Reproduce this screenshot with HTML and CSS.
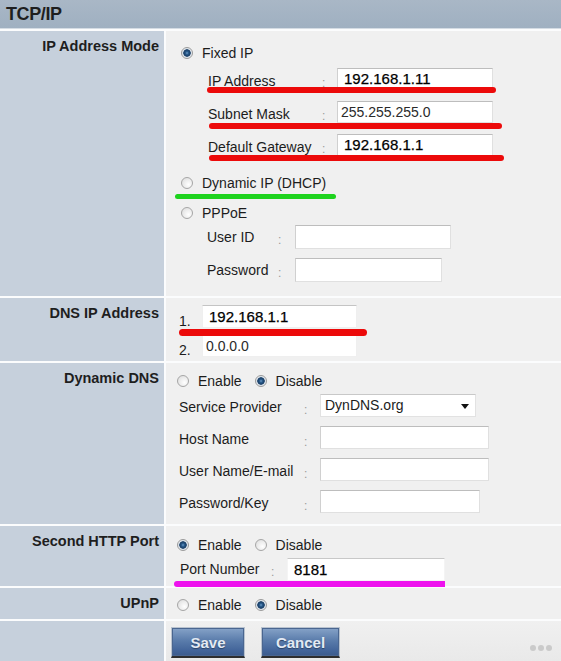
FILE: index.html
```html
<!DOCTYPE html>
<html lang="en">

<head>
    <meta charset="UTF-8">
    <meta name="viewport" content="width=device-width, initial-scale=1.0">
    <title>TCP/IP</title>
    <link rel="stylesheet" href="styles.css">
</head>

<body>
    <div class="panel">
        <div class="title">TCP/IP</div>

        <!-- IP address mode -->
        <div class="label">IP Address Mode</div>
        <div class="cell mode">
            <div class="opt"><span class="radio on"></span>Fixed IP</div>
            <div class="field fixed mark red-ip">
                <span class="name">IP Address</span><span class="colon">:</span>
                <input class="box strong" type="text" value="192.168.1.11">
            </div>
            <div class="field fixed mark red-mask">
                <span class="name">Subnet Mask</span><span class="colon">:</span>
                <input class="box" type="text" value="255.255.255.0">
            </div>
            <div class="field fixed mark red-gw">
                <span class="name">Default Gateway</span><span class="colon">:</span>
                <input class="box strong" type="text" value="192.168.1.1">
            </div>
            <div class="opt dyn mark green-dhcp"><span class="radio"></span>Dynamic IP (DHCP)</div>
            <div class="opt pppoe"><span class="radio"></span>PPPoE</div>
            <div class="field sub">
                <span class="name">User ID</span><span class="colon">:</span>
                <input class="box w156" type="text" value="">
            </div>
            <div class="field sub pass">
                <span class="name">Password</span><span class="colon">:</span>
                <input class="box w147" type="text" value="">
            </div>
        </div>

        <!-- DNS -->
        <div class="label">DNS IP Address</div>
        <div class="cell dns">
            <div class="dns-line mark red-dns">
                <span class="num">1.</span>
                <input class="box strong" type="text" value="192.168.1.1">
            </div>
            <div class="dns-line second">
                <span class="num">2.</span>
                <input class="box" type="text" value="0.0.0.0">
            </div>
        </div>

        <!-- Dynamic DNS -->
        <div class="label">Dynamic DNS</div>
        <div class="cell ddns">
            <div class="opt pair">
                <span class="choice"><span class="radio"></span>Enable</span>
                <span class="choice"><span class="radio on"></span>Disable</span>
            </div>
            <div class="field dd">
                <span class="name">Service Provider</span><span class="colon">:</span>
                <span class="select">DynDNS.org</span>
            </div>
            <div class="field dd">
                <span class="name">Host Name</span><span class="colon">:</span>
                <input class="box w169" type="text" value="">
            </div>
            <div class="field dd">
                <span class="name">User Name/E-mail</span><span class="colon">:</span>
                <input class="box w169" type="text" value="">
            </div>
            <div class="field dd">
                <span class="name">Password/Key</span><span class="colon">:</span>
                <input class="box w160" type="text" value="">
            </div>
        </div>

        <!-- Second HTTP port -->
        <div class="label">Second HTTP Port</div>
        <div class="cell http">
            <div class="opt pair">
                <span class="choice"><span class="radio on"></span>Enable</span>
                <span class="choice"><span class="radio"></span>Disable</span>
            </div>
            <div class="field port mark pink-port">
                <span class="name">Port Number</span><span class="colon">:</span>
                <input class="box strong w158" type="text" value="8181">
            </div>
        </div>

        <!-- UPnP -->
        <div class="label">UPnP</div>
        <div class="cell upnp">
            <div class="opt pair">
                <span class="choice"><span class="radio"></span>Enable</span>
                <span class="choice"><span class="radio on"></span>Disable</span>
            </div>
        </div>

        <div class="label blank"></div>
        <div class="cell buttons">
            <button class="btn save">Save</button>
            <button class="btn cancel">Cancel</button>
            <div class="dots"><span></span><span></span><span></span></div>
        </div>
    </div>
</body>

</html>
```

FILE: styles.css
```css
body {
    margin: 0;
    font-family: 'Liberation Sans', Arial, sans-serif;
    font-size: 14px;
    color: #1c1c1c;
    background: #f0f0f0;
}

.panel {
    display: grid;
    grid-template-columns: 164px 1fr;
    align-content: start;
    gap: 2px;
    background: #fbfcfd;
    width: 561px;
    height: 661px;
    overflow: hidden;
}

.title {
    grid-column: 1 / -1;
    height: 28px;
    line-height: 28px;
    padding-left: 6px;
    font-size: 18px;
    font-weight: bold;
    color: #1e1e1e;
    letter-spacing: -0.4px;
    background: linear-gradient(#a9b7c6, #9fb0c1);
    border-bottom: 1px solid #d4dce4;
}

.label {
    background: #c6d0dc;
    text-align: right;
    padding: 7px 5px 0 0;
    font-size: 14.5px;
    line-height: 16px;
    font-weight: bold;
    color: #1e1e1e;
}

.cell {
    background: #f0f0f0;
}

/* radio lines */
.opt {
    display: flex;
    align-items: center;
    height: 22px;
    padding-left: 15px;
}

.radio {
    display: inline-block;
    box-sizing: border-box;
    width: 12px;
    height: 12px;
    margin-right: 9px;
    border-radius: 50%;
    border: 1px solid #a6a6a6;
    background: radial-gradient(circle at 65% 65%, #ffffff, #dadada);
}

.radio.on {
    border-color: #9a9a9a;
    background: radial-gradient(circle at 50% 50%, #6d9cc7 0, #2a5b8c 1.5px, #173b62 3.4px, #d5dee8 4px, #fafafa 6px);
}

.choice {
    display: inline-flex;
    align-items: center;
    margin-right: 13px;
}

.pair {
    padding-left: 11px;
}

/* label : input rows */
.field {
    display: flex;
    align-items: center;
}

.name {
    white-space: nowrap;
}

.colon {
    color: #9a9a9a;
    font-size: 12px;
    padding-top: 5px;
}

.box {
    box-sizing: border-box;
    height: 22px;
    margin: -4px 0 0 0;
    padding: 0 0 0 3px;
    border: 1px solid #e0e0e0;
    border-top-color: #bdbdbd;
    border-left-color: #d0d0d0;
    background: #fff;
    font-family: 'Liberation Sans', Arial, sans-serif;
    font-size: 14px;
    color: #2a2a2a;
    outline: none;
}

.box.strong {
    padding-left: 6px;
    font-size: 15px;
    color: #000;
    -webkit-text-stroke: 0.25px #000;
}

.mode {
    padding: 11px 0 13px 0;
}

.fixed {
    height: 33px;
    padding-left: 42px;
}

.fixed .name {
    width: 114px;
}

.fixed .colon {
    width: 15px;
}

.fixed .box {
    width: 156px;
}

.dyn {
    margin-top: 9px;
}

.pppoe {
    margin-top: 8px;
}

.sub {
    height: 26px;
    padding-left: 41px;
}

.sub .name {
    width: 71px;
}

.sub .colon {
    width: 17px;
}

.sub .box {
    height: 24px;
    margin-top: 0;
}

.sub.pass {
    margin-top: 7px;
}

.w147 { width: 147px; }
.w156 { width: 156px; }
.w158 { width: 158px; }
.w160 { width: 160px; }
.w169 { width: 169px; }

/* DNS */
.dns {
    padding: 7px 0 4px 0;
}

.dns-line {
    display: flex;
    align-items: flex-end;
    padding-left: 13px;
}

.dns-line .num {
    width: 23px;
    line-height: 16px;
    margin-bottom: -1px;
}

.dns-line .box {
    width: 155px;
    height: 23px;
    margin: 0;
    border-color: #efefef;
    border-top-color: #c4c4c4;
}

.dns-line.second {
    margin-top: 6px;
}

.dns-line.second .box {
    border-top-color: #f2f2f2;
}

/* Dynamic DNS */
.ddns {
    padding: 8px 0 5px 0;
}

.ddns .pair {
    height: 20px;
}

.dd {
    height: 32px;
    padding-left: 13px;
}

.dd .name {
    width: 125px;
}

.dd .colon {
    width: 16px;
}

.dd .box {
    height: 23px;
}

.select {
    position: relative;
    box-sizing: border-box;
    width: 156px;
    height: 23px;
    margin-top: -4px;
    padding-left: 4px;
    line-height: 21px;
    background: #fff;
    border: 1px solid #e2e2e2;
    border-top-color: #c8c8c8;
}

.select::after {
    content: "";
    position: absolute;
    right: 6px;
    top: 9px;
    border-left: 4px solid transparent;
    border-right: 4px solid transparent;
    border-top: 5px solid #111;
}

/* HTTP port */
.http {
    padding: 8px 0 4px 0;
}

.port {
    height: 26px;
    padding-left: 14px;
}

.port .name {
    width: 91px;
}

.port .colon {
    width: 16px;
}

.port .box {
    height: 23px;
    margin: 0;
    border-color: #f4f4f4;
    border-top-color: #c8c8c8;
}

.upnp {
    padding: 6px 0 3px 0;
}

/* buttons row */
.blank {
    padding: 0;
    height: 40px;
}

.buttons {
    display: flex;
    gap: 16px;
    height: 40px;
    box-sizing: border-box;
    padding: 6px 0 0 5px;
    background: linear-gradient(#f0f0f0, #e9e9e9);
}

.btn {
    height: 31px;
    padding: 0;
    border: 1px solid #b9c3cf;
    border-bottom: 2px solid #2e2e2e;
    background: linear-gradient(#86a3c8, #5a7cab 45%, #43659a 80%, #3b5b8c);
    box-shadow: inset 0 0 0 1px #4a6690;
    font-family: 'Liberation Sans', Arial, sans-serif;
    font-size: 15px;
    font-weight: bold;
    color: #e3eaf3;
    text-shadow: 0 1px 1px #2b4366;
}

.save {
    width: 74px;
}

.cancel {
    width: 79px;
}

.dots {
    display: flex;
    gap: 2px;
    margin: auto 9px 10px auto;
}

.dots span {
    width: 6px;
    height: 6px;
    border-radius: 50%;
    background: #cacaca;
}

/* hand-drawn marks over the form */
.mark {
    position: relative;
}

.mark::after {
    content: "";
    position: absolute;
    height: 6px;
    border-radius: 3px;
    background: #ec0a0a;
}

.red-ip::after {
    left: 41px;
    top: 23px;
    width: 289px;
}

.red-mask::after {
    left: 43px;
    top: 26px;
    width: 293px;
}

.red-gw::after {
    left: 43px;
    top: 25px;
    width: 295px;
}

.green-dhcp::after {
    left: 9px;
    top: 22px;
    width: 161px;
    height: 5px;
    background: #1ed31e;
}

.red-dns::after {
    left: 13px;
    top: 24px;
    width: 188px;
    height: 7px;
    border-radius: 4px;
}

.pink-port::after {
    left: 8px;
    top: 25px;
    width: 271px;
    border-radius: 3px 0 0 3px;
    background: #ee12ee;
}
```
